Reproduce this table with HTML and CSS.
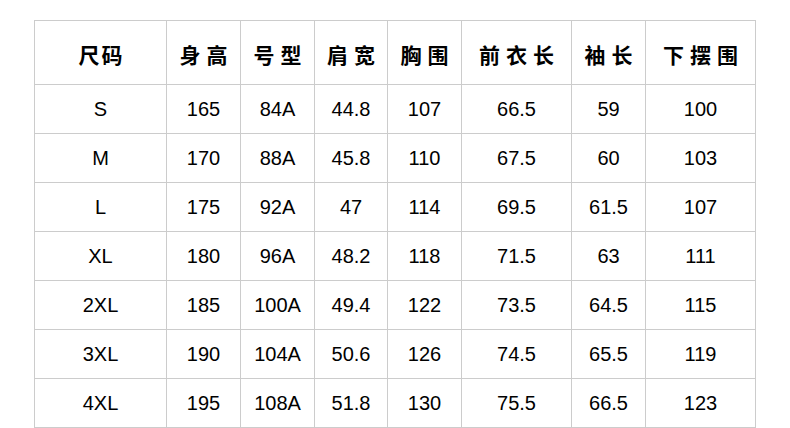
FILE: index.html
```html
<!DOCTYPE html>
<html lang="zh">
<head>
<meta charset="utf-8">
<link rel="stylesheet" href="styles.css">
</head>
<body>
<table class="size-table">
  <colgroup>
    <col class="c1"><col class="c2"><col class="c2"><col class="c3"><col class="c2"><col class="c4"><col class="c2"><col class="c4">
  </colgroup>
  <thead>
    <tr>
      <th class="tight">尺码</th><th>身高</th><th>号型</th><th>肩宽</th><th>胸围</th><th>前衣长</th><th>袖长</th><th>下摆围</th>
    </tr>
  </thead>
  <tbody>
    <tr><td>S</td><td>165</td><td>84A</td><td>44.8</td><td>107</td><td>66.5</td><td>59</td><td>100</td></tr>
    <tr><td>M</td><td>170</td><td>88A</td><td>45.8</td><td>110</td><td>67.5</td><td>60</td><td>103</td></tr>
    <tr><td>L</td><td>175</td><td>92A</td><td>47</td><td>114</td><td>69.5</td><td>61.5</td><td>107</td></tr>
    <tr><td>XL</td><td>180</td><td>96A</td><td>48.2</td><td>118</td><td>71.5</td><td>63</td><td>111</td></tr>
    <tr><td>2XL</td><td>185</td><td>100A</td><td>49.4</td><td>122</td><td>73.5</td><td>64.5</td><td>115</td></tr>
    <tr><td>3XL</td><td>190</td><td>104A</td><td>50.6</td><td>126</td><td>74.5</td><td>65.5</td><td>119</td></tr>
    <tr><td>4XL</td><td>195</td><td>108A</td><td>51.8</td><td>130</td><td>75.5</td><td>66.5</td><td>123</td></tr>
  </tbody>
</table>
</body>
</html>
```
FILE: styles.css
```css
html, body {
  margin: 0;
  padding: 0;
  background: #fff;
}
body {
  padding: 20px 0 0 34px;
  font-family: "Liberation Sans", "Noto Sans CJK SC", sans-serif;
  color: #000;
}
.size-table {
  border-collapse: collapse;
  table-layout: fixed;
  width: 722px;
}
.c1 { width: 132px; }
.c2 { width: 74px; }
.c3 { width: 73px; }
.c4 { width: 110px; }
.size-table th,
.size-table td {
  border: 1px solid #cccccc;
  text-align: center;
  vertical-align: middle;
  padding: 0;
}
.size-table th {
  height: 61px;
  font-family: "Noto Sans CJK SC", sans-serif;
  font-weight: 700;
  font-size: 21px;
  letter-spacing: 6px;
  text-indent: 6px;
  padding-top: 2px;
}
.size-table th.tight {
  letter-spacing: 2px;
  text-indent: 2px;
}
.size-table td {
  height: 47px;
  font-size: 20px;
  padding-top: 1px;
}
```
